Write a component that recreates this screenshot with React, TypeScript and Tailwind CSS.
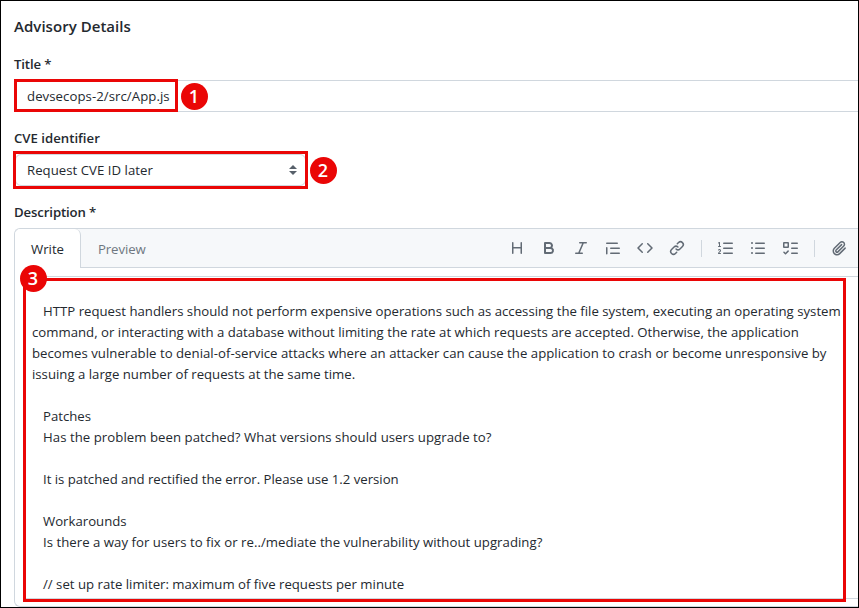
import type { ReactNode } from 'react';

function Octicon({ d }: { d: string }) {
  return (
    <svg viewBox="0 0 16 16" className="h-4 w-4 shrink-0 fill-[#626b75]">
      <path d={d} />
    </svg>
  );
}

const icons = {
  heading:
    'M3.75 2a.75.75 0 0 1 .75.75V7h7V2.75a.75.75 0 0 1 1.5 0v10.5a.75.75 0 0 1-1.5 0V8.5h-7v4.75a.75.75 0 0 1-1.5 0V2.75A.75.75 0 0 1 3.75 2Z',
  bold: 'M4 2h4.5a3.501 3.501 0 0 1 2.852 5.53A3.499 3.499 0 0 1 9.5 14H4a1 1 0 0 1-1-1V3a1 1 0 0 1 1-1Zm1 7v3h4.5a1.5 1.5 0 0 0 0-3Zm3.5-2a1.5 1.5 0 0 0 0-3H5v3Z',
  italic:
    'M6 2.75A.75.75 0 0 1 6.75 2h6.5a.75.75 0 0 1 0 1.5h-2.505l-3.858 9H9.25a.75.75 0 0 1 0 1.5h-6.5a.75.75 0 0 1 0-1.5h2.505l3.858-9H6.75A.75.75 0 0 1 6 2.75Z',
  quote:
    'M1.75 2.5h10.5a.75.75 0 0 1 0 1.5H1.75a.75.75 0 0 1 0-1.5Zm4 5h8.5a.75.75 0 0 1 0 1.5h-8.5a.75.75 0 0 1 0-1.5Zm0 5h8.5a.75.75 0 0 1 0 1.5h-8.5a.75.75 0 0 1 0-1.5ZM2.5 7.75v6a.75.75 0 0 1-1.5 0v-6a.75.75 0 0 1 1.5 0Z',
  code: 'm11.28 3.22 4.25 4.25a.75.75 0 0 1 0 1.06l-4.25 4.25a.749.749 0 0 1-1.275-.326.749.749 0 0 1 .215-.734L13.94 8l-3.72-3.72a.749.749 0 0 1 .326-1.275.749.749 0 0 1 .734.215Zm-6.56 0a.751.751 0 0 1 1.042.018.751.751 0 0 1 .018 1.042L2.06 8l3.72 3.72a.749.749 0 0 1-.326 1.275.749.749 0 0 1-.734-.215L.47 8.53a.75.75 0 0 1 0-1.06Z',
  link: 'm7.775 3.275 1.25-1.25a3.5 3.5 0 1 1 4.95 4.95l-2.5 2.5a3.5 3.5 0 0 1-4.95 0 .751.751 0 0 1 .018-1.042.751.751 0 0 1 1.042-.018 1.998 1.998 0 0 0 2.83 0l2.5-2.5a2.002 2.002 0 0 0-2.83-2.83l-1.25 1.25a.751.751 0 0 1-1.042-.018.751.751 0 0 1-.018-1.042Zm-4.69 9.64a1.998 1.998 0 0 0 2.83 0l1.25-1.25a.751.751 0 0 1 1.042.018.751.751 0 0 1 .018 1.042l-1.25 1.25a3.5 3.5 0 1 1-4.95-4.95l2.5-2.5a3.5 3.5 0 0 1 4.95 0 .751.751 0 0 1-.018 1.042.751.751 0 0 1-1.042.018 1.998 1.998 0 0 0-2.83 0l-2.5 2.5a1.998 1.998 0 0 0 0 2.83Z',
  ordered:
    'M5 3.25a.75.75 0 0 1 .75-.75h8.5a.75.75 0 0 1 0 1.5h-8.5A.75.75 0 0 1 5 3.25Zm0 5a.75.75 0 0 1 .75-.75h8.5a.75.75 0 0 1 0 1.5h-8.5A.75.75 0 0 1 5 8.25Zm0 5a.75.75 0 0 1 .75-.75h8.5a.75.75 0 0 1 0 1.5h-8.5a.75.75 0 0 1-.75-.75ZM.924 10.32a.5.5 0 0 1-.851-.525l.001-.001.001-.002.002-.004.007-.011c.097-.144.215-.273.348-.384.228-.19.588-.392 1.068-.392.468 0 .858.181 1.126.484.259.294.377.673.377 1.038 0 .987-.686 1.495-1.156 1.845l-.047.035c-.303.225-.522.4-.654.597h1.357a.5.5 0 0 1 0 1H.5a.5.5 0 0 1-.5-.5c0-1.005.692-1.52 1.167-1.875l.035-.025c.531-.396.8-.625.8-1.078a.57.57 0 0 0-.128-.376C1.806 10.068 1.695 10 1.5 10a.658.658 0 0 0-.429.163.835.835 0 0 0-.144.153ZM2.003 2.5V6h.503a.5.5 0 0 1 0 1H.5a.5.5 0 0 1 0-1h.503V3.308l-.28.14a.5.5 0 0 1-.446-.895l1.003-.5a.5.5 0 0 1 .723.447Z',
  unordered:
    'M5.75 2.5h8.5a.75.75 0 0 1 0 1.5h-8.5a.75.75 0 0 1 0-1.5Zm0 5h8.5a.75.75 0 0 1 0 1.5h-8.5a.75.75 0 0 1 0-1.5Zm0 5h8.5a.75.75 0 0 1 0 1.5h-8.5a.75.75 0 0 1 0-1.5ZM2 14a1 1 0 1 1 0-2 1 1 0 0 1 0 2Zm1-6a1 1 0 1 1-2 0 1 1 0 0 1 2 0ZM2 4a1 1 0 1 1 0-2 1 1 0 0 1 0 2Z',
  tasks:
    'M2 2h4a1 1 0 0 1 1 1v4a1 1 0 0 1-1 1H2a1 1 0 0 1-1-1V3a1 1 0 0 1 1-1Zm4.655 8.595a.75.75 0 0 1 0 1.06L4.03 14.28a.75.75 0 0 1-1.06 0l-1.5-1.5a.749.749 0 0 1 .326-1.275.749.749 0 0 1 .734.215l.97.97 2.095-2.095a.75.75 0 0 1 1.06 0ZM9.75 2.5h5.5a.75.75 0 0 1 0 1.5h-5.5a.75.75 0 0 1 0-1.5Zm0 5h5.5a.75.75 0 0 1 0 1.5h-5.5a.75.75 0 0 1 0-1.5Zm0 5h5.5a.75.75 0 0 1 0 1.5h-5.5a.75.75 0 0 1 0-1.5Zm-7.25-9v3h3v-3Z',
  clip: 'M12.212 3.02a1.753 1.753 0 0 0-2.478.003l-5.83 5.83a3.007 3.007 0 0 0-.88 2.127c0 .795.315 1.551.88 2.116.567.567 1.333.89 2.126.89.79 0 1.548-.321 2.116-.89l5.48-5.48a.75.75 0 0 1 1.061 1.06l-5.48 5.48a4.492 4.492 0 0 1-3.177 1.33c-1.2 0-2.345-.487-3.187-1.33a4.483 4.483 0 0 1-1.32-3.177c0-1.195.475-2.341 1.32-3.186l5.83-5.83a3.25 3.25 0 0 1 5.553 2.297c0 .863-.343 1.691-.953 2.301L7.439 12.39c-.375.377-.884.59-1.416.593a1.998 1.998 0 0 1-1.412-.593 1.992 1.992 0 0 1 0-2.828l5.48-5.48a.751.751 0 0 1 1.042.018.751.751 0 0 1 .018 1.042l-5.48 5.48a.492.492 0 0 0 0 .707.499.499 0 0 0 .352.154.51.51 0 0 0 .356-.154l5.833-5.827a1.755 1.755 0 0 0 0-2.481Z',
};

function Label({ children, className }: { children: ReactNode; className: string }) {
  return <div className={`h-[21px] pl-[13px] font-semibold leading-[21px] ${className}`}>{children}</div>;
}

function Badge({ n, className }: { n: number; className: string }) {
  return (
    <div
      className={`absolute flex h-[27px] w-[27px] items-center justify-center rounded-full bg-[#ea0606] text-[18px] font-semibold leading-none text-white ${className}`}
    >
      {n}
    </div>
  );
}

export default function App() {
  return (
    <div className="relative h-[608px] w-[859px] overflow-hidden border border-black bg-white font-['Open_Sans','Noto_Sans',sans-serif] text-[13.2px] text-[#24292f]">
      <h1 className="mt-[15px] h-[21px] pl-[13px] text-[15px] font-semibold leading-[21px] tracking-[0.04px]">
        Advisory Details
      </h1>

      <Label className="mt-[17px] tracking-[-0.15px]">Title *</Label>
      <div className="ml-[13px] mt-[5px] flex h-8 items-center rounded-l-md border border-r-0 border-[#d0d7de] pl-3 pt-[2px]">
        <span className="tracking-[0.06px]">devsecops-2/src/App.js</span>
      </div>

      <Label className="mt-[16px]">CVE identifier</Label>
      <div className="ml-[14px] mt-[5px] flex h-8 w-[291px] items-center justify-between rounded-md border border-[#d0d7de] pl-[11px] pr-[8px]">
        <span className="pt-[2px] tracking-[0.03px]">Request CVE ID later</span>
        <svg viewBox="0 0 8 10" className="h-[10px] w-2 fill-[#57606a]">
          <path d="M0 4 4 0l4 4ZM0 6l4 4 4-4Z" />
        </svg>
      </div>

      <Label className="mt-[16px] tracking-[-0.12px]">Description *</Label>

      <div className="ml-[13px] mt-[5px] h-[379px] rounded-l-md border border-r-0 border-[#d0d7de]">
        <div className="flex h-[39px] rounded-tl-md bg-[#f6f8fa]">
          <div className="flex w-[66px] items-center rounded-t-md border-r border-[#d0d7de] bg-white pl-4 pt-[3px]">
            Write
          </div>
          <div className="flex flex-1 items-center border-b border-[#d0d7de] pl-[17px]">
            <span className="w-[403px] pt-1 tracking-[-0.1px] text-[#6e7781]">Preview</span>
            <div className="ml-[8px] flex items-center">
              <div className="flex gap-4">
                <Octicon d={icons.heading} />
                <Octicon d={icons.bold} />
                <Octicon d={icons.italic} />
                <Octicon d={icons.quote} />
                <Octicon d={icons.code} />
                <Octicon d={icons.link} />
              </div>
              <div className="mx-4 h-[17px] w-px bg-[#d0d7de]" />
              <div className="flex gap-4">
                <Octicon d={icons.ordered} />
                <Octicon d={icons.unordered} />
                <Octicon d={icons.tasks} />
              </div>
              <div className="mx-4 h-[17px] w-px bg-[#d0d7de]" />
              <Octicon d={icons.clip} />
            </div>
          </div>
        </div>

        <div className="ml-[8px] mt-[8px] h-[323px] border-y border-[#d0d7de] pl-[9px] pt-[24px] leading-[21px]">
          <div className="whitespace-nowrap">
            <p className="pl-[11px] tracking-[0.004px]">
              HTTP request handlers should not perform expensive operations such as accessing the file system, executing an operating system
            </p>
            <p className="tracking-[0.006px]">
              command, or interacting with a database without limiting the rate at which requests are accepted. Otherwise, the application
            </p>
            <p className="tracking-[0.022px]">
              becomes vulnerable to denial-of-service attacks where an attacker can cause the application to crash or become unresponsive by
            </p>
            <p>issuing a large number of requests at the same time.</p>
          </div>
          <div className="mt-[21px] pl-[11px]">
            <p>Patches</p>
            <p className="tracking-[0.045px]">Has the problem been patched? What versions should users upgrade to?</p>
            <p className="mt-[21px] tracking-[-0.01px]">It is patched and rectified the error. Please use 1.2 version</p>
            <p className="mt-[21px]">Workarounds</p>
            <p className="tracking-[0.028px]">Is there a way for users to fix or re../mediate the vulnerability without upgrading?</p>
            <p className="mt-[21px]">// set up rate limiter: maximum of five requests per minute</p>
          </div>
        </div>
      </div>

      <div className="absolute left-[13px] top-[78px] h-[33px] w-[164px] border-3 border-[#ea0606]" />
      <div className="absolute left-[12px] top-[150px] h-[38px] w-[295px] border-3 border-[#ea0606]" />
      <div className="absolute left-[22px] top-[277px] h-[324px] w-[823px] border-3 border-[#ea0606]" />
      <Badge n={1} className="left-[179.5px] top-[81.5px]" />
      <Badge n={2} className="left-[308.5px] top-[155.5px]" />
      <Badge n={3} className="left-[18.5px] top-[263.5px]" />
    </div>
  );
}
